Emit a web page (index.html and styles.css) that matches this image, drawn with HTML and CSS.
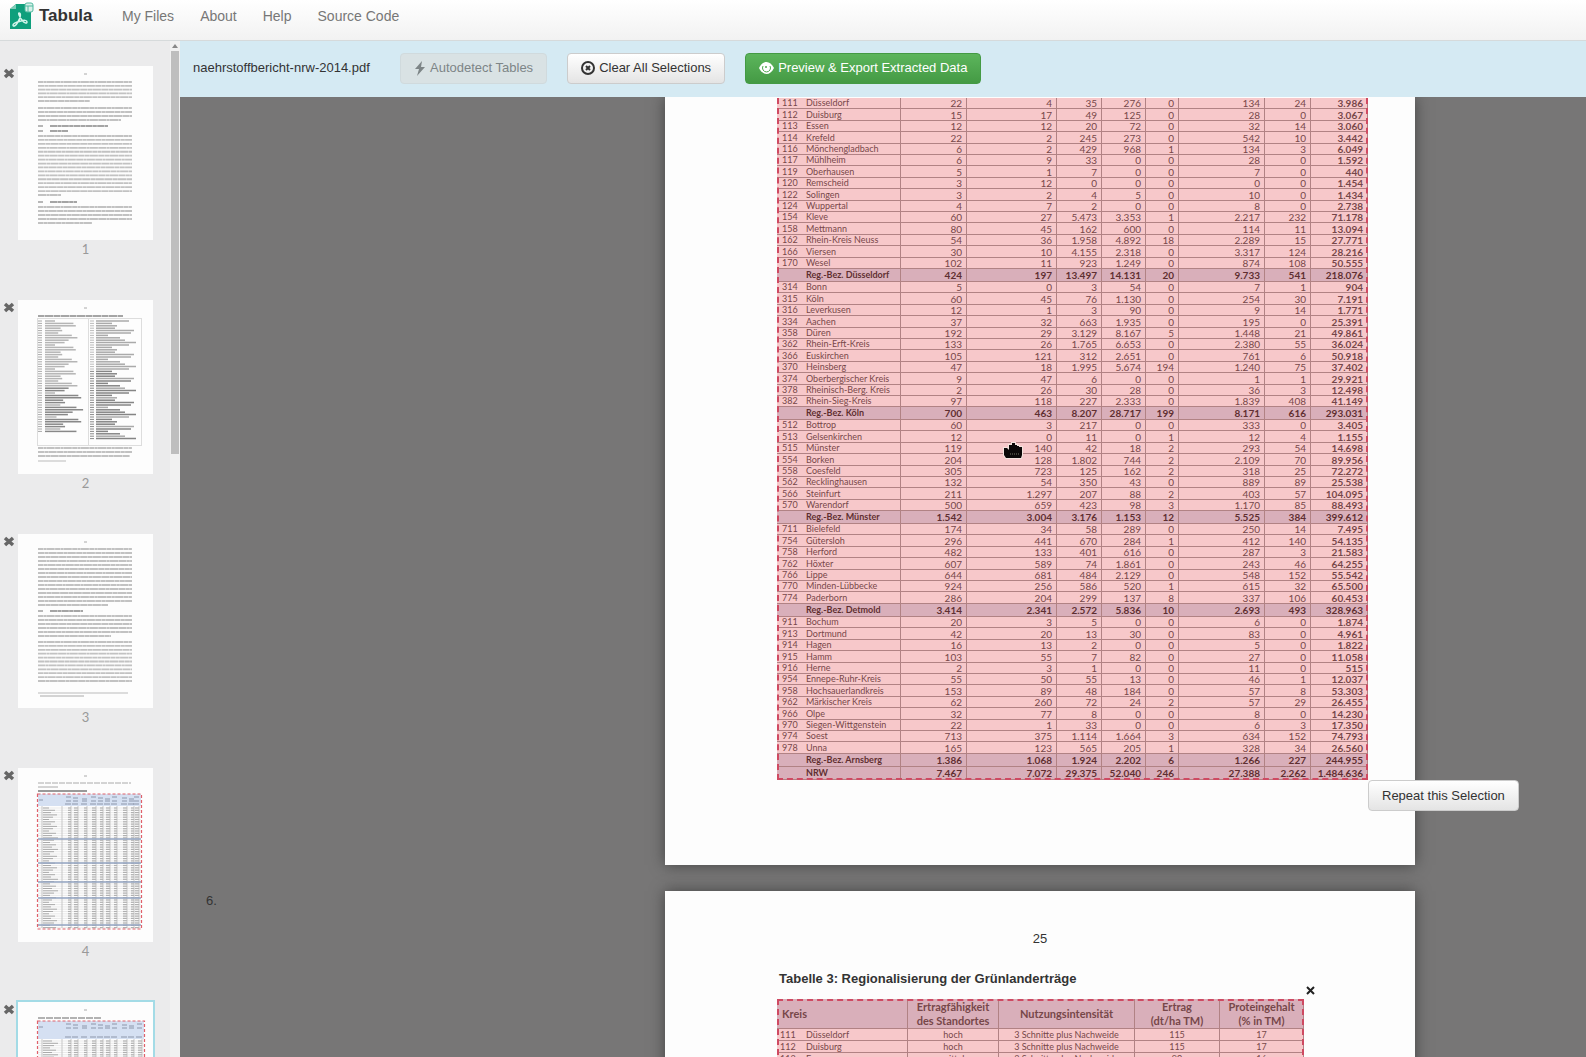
FILE: index.html
```html
<!DOCTYPE html>
<html lang="en">
<head>
<meta charset="utf-8">
<title>Tabula</title>
<link rel="stylesheet" href="styles.css">
</head>
<body>
<header class="navbar">
  <a class="brand" href="#">
    <svg class="logo" width="24" height="28" viewBox="0 0 24 28" aria-hidden="true">
      <path d="M0 7 6 2h9v7h6v18H0z" fill="#0f9f7c"/>
      <path d="M0 7 6 2v5z" fill="#7fcdb9"/>
      <rect x="15" y="1" width="8" height="9" rx="2" fill="#d8f0e9" stroke="#4fb99f"/>
      <path d="M15 4h8M18 4v6" stroke="#4fb99f"/>
      <path d="M9 11c2 0 2 4-1 9-2 4-5 5-5 3s4-3 8-4c3-1 6-1 6 1s-3 1-5-2c-2-2-4-7-3-7z" fill="none" stroke="#d5f5ec" stroke-width="1.500"/>
    </svg>
    <span>Tabula</span>
  </a>
  <nav class="nav">
    <a href="#">My Files</a>
    <a href="#">About</a>
    <a href="#">Help</a>
    <a href="#">Source Code</a>
  </nav>
</header>
<div class="workspace">
  <aside class="sidebar">
    <div class="thumbs" id="thumbs"></div>
    <div class="scrollbar" aria-hidden="true">
      <svg width="6" height="4" viewBox="0 0 6 4"><path d="M0 4 3 0l3 4z" fill="#888"/></svg>
      <div class="scroll-handle"></div>
    </div>
  </aside>
  <main class="viewer">
    <div class="toolbar">
      <span class="filename">naehrstoffbericht-nrw-2014.pdf</span>
      <button class="btn" type="button" disabled>
        <svg width="12" height="15" viewBox="0 0 12 15" aria-hidden="true"><path d="M8 0 1 8h4l-2 7 8-9H7z" fill="currentColor"/></svg>
        Autodetect Tables
      </button>
      <button class="btn" type="button">
        <svg width="14" height="14" viewBox="0 0 14 14" aria-hidden="true"><circle cx="7" cy="7" r="6" fill="none" stroke="currentColor" stroke-width="2"/><path d="m5 5 4 4m0-4-4 4" stroke="currentColor" stroke-width="2"/></svg>
        Clear All Selections
      </button>
      <button class="btn btn-success" type="button">
        <svg width="15" height="12" viewBox="0 0 15 12" aria-hidden="true"><path d="M0 6c4-8 11-8 15 0-4 8-11 8-15 0z" fill="#fff"/><path d="M4 4a4 4 0 1 0 7 0" fill="none" stroke="#4fa84f"/><circle cx="7" cy="5" r="1" fill="#4fa84f"/></svg>
        Preview &amp; Export Extracted Data
      </button>
    </div>
    <div class="pages">
      <section class="page-row">
        <div></div>
        <article class="page page-first">
          <div class="selected-area area-wide">
            <table class="sheet" id="yields">
              <colgroup><col class="w29"><col class="w95"><col class="w66"><col class="w90"><col class="w45"><col class="w44"><col class="w33"><col class="w86"><col class="w46"><col class="w57"></colgroup>
            </table>
            <div class="selection"></div>
            <svg class="pointer" width="22" height="19" viewBox="0 0 22 19" aria-hidden="true"><path d="M2 7h3l2 2V4h3V2h3v2h2v1h2v1h3v8l-1 3H4l-2-3z" fill="#0b0808" stroke="#f4e4df" stroke-width="2" paint-order="stroke"/><path d="M8 13h9" stroke="#776" stroke-dasharray="1 1"/></svg>
            <button class="btn repeat" type="button">Repeat this Selection</button>
          </div>
        </article>
      </section>
      <section class="page-row">
        <div class="page-index">6.</div>
        <article class="page page-next">
          <p class="page-number">25</p>
          <h2 class="caption">Tabelle 3: Regionalisierung der Grünlanderträge</h2>
          <div class="selected-area area-narrow">
            <table class="sheet centered" id="grassland">
              <colgroup><col class="w29"><col class="w102"><col class="w91"><col class="w136"><col class="w85"><col class="w84"></colgroup>
              <thead><tr><th class="first" colspan="2">Kreis</th><th>Ertragfähigkeit<br>des Standortes</th><th>Nutzungsintensität</th><th>Ertrag<br>(dt/ha TM)</th><th>Proteingehalt<br>(% in TM)</th></tr></thead>
              <tbody>
                <tr><td>111</td><td>Düsseldorf</td><td>hoch</td><td>3 Schnitte plus Nachweide</td><td>115</td><td>17</td></tr>
                <tr><td>112</td><td>Duisburg</td><td>hoch</td><td>3 Schnitte plus Nachweide</td><td>115</td><td>17</td></tr>
                <tr><td>113</td><td>Essen</td><td>mittel</td><td>3 Schnitte plus Nachweide</td><td>90</td><td>16</td></tr>
              </tbody>
            </table>
            <div class="selection"></div>
            <button class="dismiss" type="button" aria-label="Remove selection"><svg width="9" height="9" viewBox="0 0 9 9"><path d="m1 1 7 7m0-7L1 8" stroke="#222" stroke-width="2"/></svg></button>
          </div>
        </article>
      </section>
    </div>
  </main>
</div>
<script src="script.js"></script>
</body>
</html>
```
FILE: styles.css
```css
* { box-sizing: border-box; }
body {
  margin: 0;
  height: 100vh;
  display: flex;
  flex-direction: column;
  overflow: hidden;
  font: 13px/20px "Liberation Sans", Arial, sans-serif;
  color: #333;
}
.navbar {
  flex: none;
  height: 41px;
  display: flex;
  align-items: flex-start;
  padding: 2px 10px;
  background: linear-gradient(#fff, #f2f2f2);
  border-bottom: 1px solid #d6dadb;
}
.brand {
  display: flex;
  gap: 5px;
  width: 112px;
  color: #333;
  font-size: 17px;
  font-weight: bold;
  line-height: 28px;
  text-decoration: none;
}
.nav { display: flex; gap: 26px; font-size: 14px; line-height: 28px; }
.nav a { color: #777; text-decoration: none; }

.workspace { flex: 1; min-height: 0; display: flex; }
.sidebar {
  flex: none;
  width: 180px;
  display: flex;
  background: #ebebec;
  overflow: hidden;
}
.thumbs { flex: 1; padding-top: 25px; }
.thumb { display: flex; align-items: flex-start; gap: 3px; height: 234px; padding-left: 3px; }
.thumb-remove { border: 0; background: none; padding: 1px 0 0; width: 12px; height: 13px; display: block; }
.thumb-remove svg { display: block; }
.thumb figure { margin: 0; width: 135px; }
.thumb figure svg { display: block; background: #fdfdfd; }
.thumb.current figure svg { outline: 2px solid #a3dbe6; }
.thumb figcaption {
  color: #999;
  font: 13px/18px Lato, sans-serif;
  text-align: center;
}
.scrollbar {
  width: 10px;
  padding-top: 3px;
  display: flex;
  flex-direction: column;
  align-items: center;
  gap: 3px;
  background: #f1f1f1;
}
.scroll-handle { width: 8px; height: 403px; background: #bebebe; }

.viewer { flex: 1; min-width: 0; display: flex; flex-direction: column; background: #777676; }
.toolbar {
  flex: none;
  height: 56px;
  display: flex;
  align-items: center;
  padding: 0 13px 2px;
  gap: 20px;
  background: #d5eaf3;
}
.filename { width: 187px; white-space: nowrap; }
.btn {
  display: flex;
  align-items: center;
  gap: 4px;
  height: 31px;
  padding: 0 13px;
  border: 1px solid #ccc;
  border-radius: 4px;
  background: linear-gradient(#fff, #e4e4e4);
  color: #333;
  font: inherit;
  white-space: nowrap;
}
.btn:disabled { background: #d9e2e4; border-color: #d0dadd; color: #7d8587; }
.btn-success {
  background: linear-gradient(#5cb55c, #449a44);
  border-color: #449a44;
  color: #fff;
}

.pages { flex: 1; min-height: 0; display: flex; flex-direction: column; gap: 26px; overflow: hidden; }
.page-row { flex: none; display: grid; grid-template-columns: 485fr 750px 171fr; }
.page-index { padding-left: 26px; }
.page { background: #fdfdfd; box-shadow: 0 0 14px #444; padding: 1px 112px 85px; }
.page-next { padding-top: 38px; height: 1061px; }
.page-number { margin: 0; text-align: center; }
.caption { margin: 20px 0 10px 2px; font-size: 13px; line-height: 20px; }
.selected-area { position: relative; }
.area-wide { width: 591px; }
.area-narrow { width: 527px; }
.selection {
  position: absolute;
  inset: 0;
  background: rgba(235, 80, 85, 0.3);
  border: 2px dashed #cf4a62;
}
.area-wide .selection { border-top: 0; }
.repeat { position: absolute; left: 100%; top: 100%; }
.dismiss { position: absolute; left: 100%; bottom: 100%; margin: 0 0 4px 2px; border: 0; padding: 0; background: none; }
.dismiss svg { display: block; }
.pointer { position: absolute; left: 225px; top: 343px; }

.sheet {
  width: 100%;
  table-layout: fixed;
  border-collapse: separate;
  border-spacing: 0;
  font: 10px/10px Lato, sans-serif;
  color: #444;
}
.sheet td {
  height: 11px;
  padding: 0 4px;
  border-right: 1px solid #999;
  border-bottom: 1px solid #999;
  text-align: right;
  white-space: nowrap;
}
.sheet td:nth-child(-n+2) { padding: 0; text-align: left; font-size: 9px; }
.sheet td:first-child { padding-left: 5px; border-right: 0; }
.sheet td:last-child { font-weight: bold; }
.sheet tr:nth-child(5n+2) td, .sheet tr:nth-child(5n+4) td { height: 12px; }
.sheet tr.total td { height: 13px; background: #d2d9e5; font-weight: bold; color: #222; }
.centered th {
  height: 30px;
  padding: 0;
  background: #d2d9e5;
  border-right: 1px solid #999;
  border-bottom: 1px solid #999;
  font: bold 11px/14px Lato, sans-serif;
}
.centered th.first { text-align: left; padding-left: 5px; }
.sheet.centered tbody td { height: 12px; font-size: 9px; font-weight: normal; text-align: center; }
.sheet.centered tbody td:nth-child(-n+2) { text-align: left; padding-left: 3px; }
.sheet.centered tbody td:nth-child(2) { padding-left: 0; }
.w29 { width: 29px; }
.w33 { width: 33px; }
.w44 { width: 44px; }
.w45 { width: 45px; }
.w46 { width: 46px; }
.w57 { width: 57px; }
.w66 { width: 66px; }
.w84 { width: 84px; }
.w85 { width: 85px; }
.w86 { width: 86px; }
.w90 { width: 90px; }
.w91 { width: 91px; }
.w95 { width: 95px; }
.w102 { width: 102px; }
.w136 { width: 136px; }
```
FILE: script.js
```js
// One block per administrative district; the last line of a block is its total.
const districts = [
`111|Düsseldorf|22|4|35|276|0|134|24|3.986
112|Duisburg|15|17|49|125|0|28|0|3.067
113|Essen|12|12|20|72|0|32|14|3.060
114|Krefeld|22|2|245|273|0|542|10|3.442
116|Mönchengladbach|6|2|429|968|1|134|3|6.049
117|Mühlheim|6|9|33|0|0|28|0|1.592
119|Oberhausen|5|1|7|0|0|7|0|440
120|Remscheid|3|12|0|0|0|0|0|1.454
122|Solingen|3|2|4|5|0|10|0|1.434
124|Wuppertal|4|7|2|0|0|8|0|2.738
154|Kleve|60|27|5.473|3.353|1|2.217|232|71.178
158|Mettmann|80|45|162|600|0|114|11|13.094
162|Rhein-Kreis Neuss|54|36|1.958|4.892|18|2.289|15|27.771
166|Viersen|30|10|4.155|2.318|0|3.317|124|28.216
170|Wesel|102|11|923|1.249|0|874|108|50.555
|Reg.-Bez. Düsseldorf|424|197|13.497|14.131|20|9.733|541|218.076`,
`314|Bonn|5|0|3|54|0|7|1|904
315|Köln|60|45|76|1.130|0|254|30|7.191
316|Leverkusen|12|1|3|90|0|9|14|1.771
334|Aachen|37|32|663|1.935|0|195|0|25.391
358|Düren|192|29|3.129|8.167|5|1.448|21|49.861
362|Rhein-Erft-Kreis|133|26|1.765|6.653|0|2.380|55|36.024
366|Euskirchen|105|121|312|2.651|0|761|6|50.918
370|Heinsberg|47|18|1.995|5.674|194|1.240|75|37.402
374|Oberbergischer Kreis|9|47|6|0|0|1|1|29.921
378|Rheinisch-Berg. Kreis|2|26|30|28|0|36|3|12.498
382|Rhein-Sieg-Kreis|97|118|227|2.333|0|1.839|408|41.149
|Reg.-Bez. Köln|700|463|8.207|28.717|199|8.171|616|293.031`,
`512|Bottrop|60|3|217|0|0|333|0|3.405
513|Gelsenkirchen|12|0|11|0|1|12|4|1.155
515|Münster|119|140|42|18|2|293|54|14.698
554|Borken|204|128|1.802|744|2|2.109|70|89.956
558|Coesfeld|305|723|125|162|2|318|25|72.272
562|Recklinghausen|132|54|350|43|0|889|89|25.538
566|Steinfurt|211|1.297|207|88|2|403|57|104.095
570|Warendorf|500|659|423|98|3|1.170|85|88.493
|Reg.-Bez. Münster|1.542|3.004|3.176|1.153|12|5.525|384|399.612`,
`711|Bielefeld|174|34|58|289|0|250|14|7.495
754|Gütersloh|296|441|670|284|1|412|140|54.135
758|Herford|482|133|401|616|0|287|3|21.583
762|Höxter|607|589|74|1.861|0|243|46|64.255
766|Lippe|644|681|484|2.129|0|548|152|55.542
770|Minden-Lübbecke|924|256|586|520|1|615|32|65.500
774|Paderborn|286|204|299|137|8|337|106|60.453
|Reg.-Bez. Detmold|3.414|2.341|2.572|5.836|10|2.693|493|328.963`,
`911|Bochum|20|3|5|0|0|6|0|1.874
913|Dortmund|42|20|13|30|0|83|0|4.961
914|Hagen|16|13|2|0|0|5|0|1.822
915|Hamm|103|55|7|82|0|27|0|11.058
916|Herne|2|3|1|0|0|11|0|515
954|Ennepe-Ruhr-Kreis|55|50|55|13|0|46|1|12.037
958|Hochsauerlandkreis|153|89|48|184|0|57|8|53.303
962|Märkischer Kreis|62|260|72|24|2|57|29|26.455
966|Olpe|32|77|8|0|0|8|0|14.230
970|Siegen-Wittgenstein|22|1|33|0|0|6|3|17.350
974|Soest|713|375|1.114|1.664|3|634|152|74.793
978|Unna|165|123|565|205|1|328|34|26.560
|Reg.-Bez. Arnsberg|1.386|1.068|1.924|2.202|6|1.266|227|244.955
|NRW|7.467|7.072|29.375|52.040|246|27.388|2.262|1.484.636`
];
document.getElementById('yields').insertAdjacentHTML('beforeend', districts.map(block =>
  '<tbody>' + block.split('\n').map(line => {
    const cells = line.split('|').map(c => `<td>${c}</td>`).join('');
    return `<tr${line[0] === '|' ? ' class="total"' : ''}>${cells}</tr>`;
  }).join('') + '</tbody>').join(''));

const line = (x1, y, x2, color, w = 1, dash = '') =>
  `<path d="M${x1} ${y}H${x2}" stroke="${color}" stroke-width="${w}" stroke-dasharray="${dash}"/>`;

// A paragraph of miniature text: n lines spread from top to bottom, the last one shorter.
function para(top, bottom, n, last = 80) {
  let s = '';
  for (let i = 0; i < n; i++) {
    const y = top + (bottom - top) * i / Math.max(1, n - 1);
    s += line(20, y, i === n - 1 ? last : 114, '#c2c2c2', 1.8, `${5 + i % 4} .4 ${3 + i % 3} .3 8 .4`);
  }
  return s;
}
const heading = (y, x2) => line(20, y, 25, '#999', 1.4) + line(32, y, x2, '#888', 1.5, '7 .4 4 .4');
const folio = line(66, 8, 69, '#aaa');

function index() {
  let s = folio + line(20, 16, 105, '#888', 1.5, '6 .5 9 .5') +
    '<rect x="19.5" y="18.5" width="104" height="127" fill="none" stroke="#ddd"/><path d="M70.500 19V145" stroke="#ddd"/>';
  const widths = [10, 17, 31, 22, 36, 14, 27, 33, 19, 38];
  for (let i = 0; i < 50; i++) {
    const y = 21 + i * 2.4;
    const dark = i > 27 && i % 5 ? '#888' : '#b5b5b5';
    if (i < 47) s += line(20, y, 24, '#aaa') + line(27, y, 29 + widths[i * 7 % 10] * (i > 30 ? .95 : .8), dark, 1.5);
    s += line(72, y, 76, i > 20 ? '#888' : '#bbb') + line(78, y, 80 + widths[(i * 3 + 2) % 10], i > 20 && i % 4 ? '#858585' : '#aaa', 1.5);
  }
  return s + para(148, 156, 3, 112) + line(20, 161, 48, '#bbb');
}

function grid(top, head, right, bands) {
  let s = folio + `<rect x="20" y="${top}" width="${right - 20}" height="${head - top}" fill="#d5e0f2"/>`;
  const cols = [24, 44, 53, 60, 69, 78, 85, 92, 99, 109, 116, right - 2];
  for (let y = head + 2; y < 160; y += 2.3) {
    s += line(20, y, right, '#e3e3e3', .7) + line(25, y, 31 + (y * 7 | 0) % 10, '#aaa');
    cols.slice(2).forEach((x, i) => { s += line(x - 3 - i % 2, y, x, '#b0b0b0', 1.2); });
  }
  cols.forEach(x => { s += `<path d="M${x} ${head}V160" stroke="#bbb" stroke-width=".8"/>`; });
  cols.slice(2).forEach((x, i) => {
    s += line(x - 5, top + 3 + i % 3, x, '#8c96aa') + line(x - 5, top + 7, x, '#8c96aa') + line(x - 6, head - 2, x, '#8c96aa');
  });
  s += line(21, top + 6, 25, '#8c96aa');
  bands.forEach(y => { s += line(20, y, right, '#93a5c2', 1.5); });
  return s + `<rect x="19.5" y="${top}" width="${right - 19}" height="${161 - top}" fill="none" stroke="#e0606a" stroke-width="1.2" stroke-dasharray="3 2"/>`;
}

const thumbs = [
  folio + para(16, 35, 6, 72) + para(42, 54, 4, 103) + heading(60, 90) + heading(65, 50) + para(70, 129, 16, 43) + heading(136, 59) + para(141, 157, 5, 74),
  index(),
  folio + para(15, 71, 15, 90) + heading(77, 65) + para(82, 102, 6, 93) + para(108, 147, 11, 114) + line(20, 159, 110, '#bbb') + line(22, 162, 66, '#aaa'),
  line(20, 15, 113, '#aaa', 1, '6 1') + line(20, 19, 40, '#aaa') + line(20, 23, 69, '#777', 1.6) + grid(26, 38, 123, [71, 95, 114, 130, 157]),
  line(20, 16, 84, '#999', 1.4, '7 1') + grid(19, 37, 126, [70, 94, 113])
];
const current = 4;
document.getElementById('thumbs').innerHTML = thumbs.map((art, i) => `
  <div class="thumb${i === current ? ' current' : ''}">
    <button class="thumb-remove" type="button" aria-label="Remove page ${i + 1}"><svg width="12" height="11" viewBox="0 0 12 11"><path d="m2 2 8 7m0-7L2 9" stroke="#666" stroke-width="3.500"/></svg></button>
    <figure><svg width="135" height="174" viewBox="0 0 135 174" aria-hidden="true">${art}</svg>${i === current ? '' : `<figcaption>${i + 1}</figcaption>`}</figure>
  </div>`).join('');
```
